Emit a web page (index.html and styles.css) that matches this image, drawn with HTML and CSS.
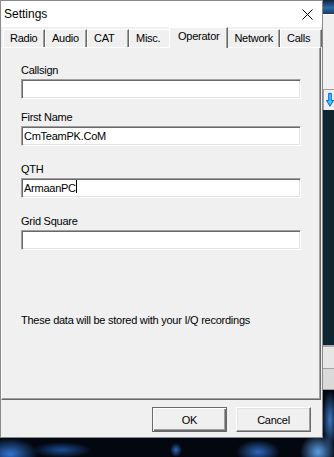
FILE: index.html
```html
<!DOCTYPE html>
<html lang="en">
<head>
    <meta charset="UTF-8">
    <meta name="viewport" content="width=device-width, initial-scale=1.0">
    <title>Settings</title>
    <link rel="stylesheet" href="styles.css">
</head>
<body>
    <div class="desktop">
        <div class="window">
            <div class="titlebar">
                <span class="title">Settings</span>
                <svg class="close" width="11" height="11" viewBox="0 0 11 11">
                    <path d="M0.5 0.5L10.5 10.5M10.5 0.5L0.5 10.5" stroke="#000" stroke-width="1"/>
                </svg>
            </div>
            <div class="tabs">
                <div class="tab">Radio</div>
                <div class="tab">Audio</div>
                <div class="tab">CAT</div>
                <div class="tab">Misc.</div>
                <div class="tab active">Operator</div>
                <div class="tab">Network</div>
                <div class="tab">Calls</div>
            </div>
            <div class="panel">
                <div class="field">
                    <div class="label">Callsign</div>
                    <div class="textbox"></div>
                </div>
                <div class="field tight">
                    <div class="label">First Name</div>
                    <div class="textbox">CmTeamPK.CoM</div>
                </div>
                <div class="field">
                    <div class="label">QTH</div>
                    <div class="textbox">ArmaanPC<span class="caret"></span></div>
                </div>
                <div class="field">
                    <div class="label">Grid Square</div>
                    <div class="textbox"></div>
                </div>
                <p class="note">These data will be stored with your I/Q recordings</p>
            </div>
            <div class="buttons">
                <button class="btn default">OK</button>
                <button class="btn">Cancel</button>
            </div>
        </div>
        <div class="strip">
            <div class="s-photo"></div>
            <div class="s-app"></div>
            <div class="s-arrow">
                <svg width="9" height="16" viewBox="0 0 9 16">
                    <path d="M3 0.5h3v8h2.5l-4 6.5-4-6.5h2.5z" fill="#22d4ff" stroke="#1448c8" stroke-width="1"/>
                </svg>
            </div>
            <div class="s-dark"></div>
            <div class="s-grey"></div>
        </div>
    </div>
</body>
</html>
```

FILE: styles.css
```css
* {
    box-sizing: border-box;
}
body {
    margin: 0;
    width: 334px;
    height: 457px;
    overflow: hidden;
    font-family: "Liberation Sans", Arial, sans-serif;
    font-size: 11px;
    letter-spacing: -0.25px;
    color: #000;
    background:
        radial-gradient(ellipse 28px 16px at 10px 454px, #2f74d0, transparent),
        radial-gradient(ellipse 30px 8px at 62px 450px, #1a4c94, transparent),
        radial-gradient(ellipse 6px 7px at 176px 450px, #2a68c0, transparent),
        radial-gradient(ellipse 22px 12px at 258px 452px, #2a66b8, transparent),
        radial-gradient(ellipse 18px 18px at 318px 452px, #5b9ee6, transparent),
        radial-gradient(ellipse 8px 30px at 330px 420px, #3a78c0, transparent),
        #03070f;
}
.desktop {
    display: grid;
    grid-template-columns: 323px 11px;
    align-items: start;
}
.window {
    height: 438px;
    border: 1px solid #8a8a8a;
    background: #f0f0f0;
    display: flex;
    flex-direction: column;
}
.titlebar {
    height: 26px;
    background: #fff;
    display: flex;
    align-items: center;
    justify-content: space-between;
    padding: 0 9px 0 3px;
    font-size: 12px;
    letter-spacing: 0;
}
.tabs {
    display: flex;
    align-items: flex-end;
    height: 20px;
    padding-left: 2px;
}
.tab {
    height: 18px;
    min-width: 42px;
    padding: 0 6px;
    line-height: 16px;
    background: #f0f0f0;
    border: 1px solid;
    border-color: #fff #696969 #fff #fff;
    border-bottom: 0;
    box-shadow: inset -1px 0 0 #a0a0a0;
}
.tab.active {
    position: relative;
    z-index: 1;
    height: 21px;
    margin: 0 -1px -1px -2px;
    padding: 0 8px;
}
.panel {
    height: 353px;
    margin-right: 1px;
    padding: 16px 0 0 19px;
    border: 1px solid;
    border-color: #fff #696969 #696969 #fff;
    box-shadow: inset -1px -1px 0 #a0a0a0;
}
.field + .field {
    margin-top: 17px;
}
.field.tight {
    margin-top: 12px;
}
.label {
    line-height: 13px;
    margin-bottom: 2px;
}
.textbox {
    width: 280px;
    height: 20px;
    padding: 0 1px 0 2px;
    line-height: 18px;
    background: #fff;
    border: 1px solid;
    border-color: #a0a0a0 #fff #fff #a0a0a0;
    box-shadow: inset 1px 1px 0 #696969, inset -1px -1px 0 #e3e3e3;
}
.caret {
    display: inline-block;
    width: 1px;
    height: 13px;
    background: #000;
    vertical-align: -1px;
}
.note {
    margin: 64px 0 0;
    line-height: 13px;
}
.buttons {
    height: 37px;
    display: flex;
    justify-content: flex-end;
    gap: 9px;
    padding: 7px 11px 0 0;
}
.btn {
    width: 75px;
    height: 25px;
    padding: 0;
    font: inherit;
    letter-spacing: inherit;
    color: #000;
    background: #f0f0f0;
    border: 1px solid;
    border-color: #fff #696969 #696969 #fff;
    box-shadow: inset -1px -1px 0 #a0a0a0, inset 1px 1px 0 #e3e3e3;
}
.btn.default {
    border-color: #696969;
    box-shadow: inset 1px 1px 0 #fff, inset -1px -1px 0 #696969, inset -2px -2px 0 #a0a0a0;
}
.strip {
    display: flex;
    flex-direction: column;
}
.s-photo {
    height: 14px;
    background: linear-gradient(#0d2540, #2f6aa8 55%, #163a66);
}
.s-app {
    height: 76px;
    background: #f0f0f0;
    border-top: 1px solid #fff;
    border-bottom: 1px solid #a0a0a0;
}
.s-arrow {
    height: 20px;
    display: flex;
    align-items: center;
    padding-left: 2px;
    background: #f0f0f0;
    border-left: 1px solid #a0a0a0;
}
.s-dark {
    height: 235px;
    background: #0c2731;
}
.s-grey {
    height: 45px;
    background: #d9d9d9;
    border-top: 2px solid #a9a9a9;
    border-bottom: 1px solid #a0a0a0;
    box-shadow: inset 0 21px 0 #e6e6e6, inset 0 22px 0 #a0a0a0;
}
```
